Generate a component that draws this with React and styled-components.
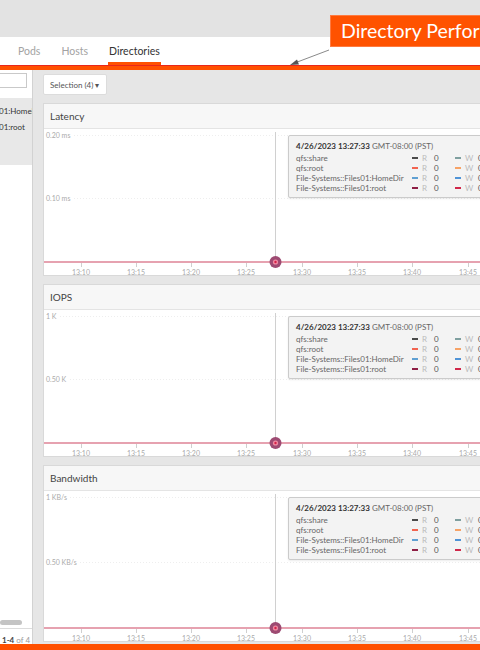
import React from 'react';
import styled, { createGlobalStyle } from 'styled-components';

const Global = createGlobalStyle`
  html, body { margin: 0; padding: 0; width: 480px; height: 650px; overflow: hidden; background: #e3e3e3; }
  body { font-family: Lato, "Open Sans", sans-serif; }
  * { box-sizing: border-box; }
`;

const Page = styled.div`
  position: relative;
  width: 480px;
  height: 650px;
  display: flex;
  flex-direction: column;
  overflow: hidden;
`;

const TopBand = styled.div`
  height: 37px;
  flex-shrink: 0;
  background: #e3e3e3;
`;

const TabBar = styled.nav`
  height: 28px;
  flex-shrink: 0;
  background: #fff;
  display: flex;
  align-items: stretch;
  gap: 19px;
  padding-left: 17px;
`;

const Tab = styled.div`
  display: flex;
  align-items: center;
  padding: 3px 1px 0;
  font-size: 10.5px;
  color: ${p => (p.$active ? '#333' : '#a3a3a3')};
  border-bottom: 3px solid ${p => (p.$active ? '#ff5000' : 'transparent')};
`;

const OrangeRule = styled.div`
  height: 5px;
  flex-shrink: 0;
  background: #ff5000;
  border-top: 1px solid #e8261c;
`;

const Body = styled.div`
  flex: 1;
  display: flex;
  min-height: 0;
`;

const Sidebar = styled.aside`
  width: 33px;
  flex-shrink: 0;
  background: #fff;
  border-right: 1px solid #d2d2d2;
  display: flex;
  flex-direction: column;
  overflow: hidden;
`;

const Search = styled.div`
  margin: 3px 0 0 -12px;
  width: 39px;
  height: 15px;
  border: 1px solid #c9c9c9;
  background: #fff;
`;

const List = styled.div`
  margin-top: 10px;
  height: 67px;
  background: #e8e8e8;
  padding-top: 5px;
`;

const ListItem = styled.div`
  font-size: 8px;
  line-height: 16px;
  color: #333;
  white-space: nowrap;
  margin-left: -1px;
`;

const Spacer = styled.div`
  flex: 1;
`;

const Scrollbar = styled.div`
  width: 22px;
  height: 5px;
  border-radius: 3px;
  background: #c4c4c4;
  margin-bottom: 3px;
`;

const Footer = styled.div`
  height: 16px;
  border-top: 1px solid #dcdcdc;
  padding: 6px 0 0 2px;
  font-size: 8px;
  line-height: 10px;
  color: #999;
  white-space: nowrap;
  b { color: #444; font-weight: 700; }
`;

const Main = styled.main`
  flex: 1;
  background: #e6e6e6;
  padding: 4px 0 0 10px;
  display: flex;
  flex-direction: column;
  align-items: flex-start;
  overflow: hidden;
`;

const SelectButton = styled.button`
  height: 21px;
  width: 64px;
  padding: 0 0 0 6px;
  border: 1px solid #dcdcdc;
  border-radius: 2px;
  background: #fff;
  font-family: inherit;
  font-size: 8px;
  color: #555;
  text-align: left;
  white-space: nowrap;
`;

const Panel = styled.section`
  flex-shrink: 0;
  margin-top: 8px;
  width: 470px;
  height: ${p => p.$h}px;
  background: #fff;
  border: 1px solid #d9d9d9;
  display: flex;
  flex-direction: column;
`;

const PanelHeader = styled.header`
  height: 25px;
  flex-shrink: 0;
  background: #f7f7f7;
  border-bottom: 1px solid #e4e4e4;
  display: flex;
  align-items: center;
  padding-left: 6px;
  font-size: 10px;
  color: #444;
`;

const ChartArea = styled.div`
  position: relative;
  flex: 1;
`;

const Tooltip = styled.div`
  position: absolute;
  left: 244px;
  top: 6px;
  width: 240px;
  height: 63px;
  background: #f3f3f3;
  border: 1px solid #cbcbcb;
  border-radius: 2px;
  box-shadow: 0 1px 2px rgba(0, 0, 0, 0.08);
  padding: 5px 0 0 7px;
  font-size: 8px;
  color: #666;
`;

const TipDate = styled.div`
  line-height: 11px;
  color: #666;
  margin-bottom: 1px;
  white-space: nowrap;
  b { color: #333; font-weight: 700; }
`;

const TipRow = styled.div`
  display: grid;
  grid-template-columns: 116px 10px 12px 21px 10px 13px 20px;
  align-items: center;
  line-height: 10px;
  white-space: nowrap;
`;

const Dash = styled.span`
  display: block;
  width: 6px;
  height: 2px;
  background: ${p => p.$c};
`;

const Letter = styled.span`
  color: #bbb;
`;

const Val = styled.span`
  color: #555;
`;

const Callout = styled.div`
  position: absolute;
  left: 330px;
  top: 15px;
  width: 170px;
  height: 32px;
  background: #ff5200;
  border: 1px solid #ff7a40;
  color: #fff;
  font-family: Lato, "Open Sans", sans-serif;
  font-size: 19.5px;
  line-height: 30px;
  padding-left: 10px;
  white-space: nowrap;
  overflow: hidden;
`;

const ArrowLayer = styled.svg`
  position: absolute;
  left: 0;
  top: 0;
  pointer-events: none;
`;

const BottomBand = styled.div`
  height: 6px;
  flex-shrink: 0;
  background: #ff5000;
`;

const TICKS = [
  [37, '13:10'], [92, '13:15'], [147, '13:20'], [202, '13:25'],
  [258, '13:30'], [313, '13:35'], [368, '13:40'], [424, '13:45'], [479, '13:50'],
];

const SERIES = [
  { name: 'qfs:share', r: '#4a4a4a', w: '#7f9f9f' },
  { name: 'qfs:root', r: '#f26450', w: '#f6a266' },
  { name: 'File-Systems::Files01:HomeDir', r: '#5fa0d2', w: '#4f93d6' },
  { name: 'File-Systems::Files01:root', r: '#8e1f45', w: '#d0284a' },
];

function Chart({ height, top, mid, topW, midW }) {
  const base = height - 13;
  const midY = (6 + base) / 2;
  return (
    <svg width="470" height={height} style={{ display: 'block' }}>
      <line x1={topW} y1="6.5" x2="470" y2="6.5" stroke="#eeeeee" strokeDasharray="1 2" />
      <line x1={midW} y1={midY} x2="470" y2={midY} stroke="#eeeeee" strokeDasharray="1 2" />
      <text x="2" y="8.5" fontSize="7" fill="#aaa" fontFamily="Lato, sans-serif">{top}</text>
      <text x="2" y={midY + 2.5} fontSize="7" fill="#aaa" fontFamily="Lato, sans-serif">{mid}</text>
      <line x1="231.5" y1="3" x2="231.5" y2={base} stroke="#d0d0d0" />
      <line x1="0" y1={base} x2="470" y2={base} stroke="#e6a2b0" strokeWidth="2" />
      {TICKS.map(([x, l]) => (
        <g key={l}>
          <line x1={x + 0.5} y1={base + 1} x2={x + 0.5} y2={base + 5} stroke="#cfcfcf" />
          <text x={x} y={base + 12.5} fontSize="7" fill="#aaa" textAnchor="middle" fontFamily="Lato, sans-serif">{l}</text>
        </g>
      ))}
      <circle cx="231.5" cy={base} r="6" fill="#9d4a72" />
      <circle cx="231.5" cy={base} r="2.6" fill="#f08aa2" />
      <circle cx="231.5" cy={base} r="1.2" fill="#d42048" />
    </svg>
  );
}

function TipBox() {
  return (
    <Tooltip>
      <TipDate><b>4/26/2023 13:27:33</b> GMT-08:00 (PST)</TipDate>
      {SERIES.map(s => (
        <TipRow key={s.name}>
          <span>{s.name}</span>
          <Dash $c={s.r} />
          <Letter>R</Letter>
          <Val>0</Val>
          <Dash $c={s.w} />
          <Letter>W</Letter>
          <Val>0</Val>
        </TipRow>
      ))}
    </Tooltip>
  );
}

function ChartPanel({ title, h, top, mid, topW, midW }) {
  const chartH = h - 2 - 25;
  return (
    <Panel $h={h}>
      <PanelHeader>{title}</PanelHeader>
      <ChartArea>
        <Chart height={chartH} top={top} mid={mid} topW={topW} midW={midW} />
        <TipBox />
      </ChartArea>
    </Panel>
  );
}

export default function App() {
  return (
    <Page>
      <Global />
      <TopBand />
      <TabBar>
        <Tab>Pods</Tab>
        <Tab>Hosts</Tab>
        <Tab $active>Directories</Tab>
      </TabBar>
      <OrangeRule />
      <Body>
        <Sidebar>
          <Search />
          <List>
            <ListItem>01:HomeDir</ListItem>
            <ListItem>01:root</ListItem>
          </List>
          <Spacer />
          <Scrollbar />
          <Footer><b>1-4</b> of 4</Footer>
        </Sidebar>
        <Main>
          <SelectButton>Selection (4) ▾</SelectButton>
          <ChartPanel title="Latency" h={173} top="0.20 ms" mid="0.10 ms" topW={30} midW={30} />
          <ChartPanel title="IOPS" h={173} top="1 K" mid="0.50 K" topW={16} midW={26} />
          <ChartPanel title="Bandwidth" h={177} top="1 KB/s" mid="0.50 KB/s" topW={26} midW={36} />
        </Main>
      </Body>
      <BottomBand />
      <Callout>Directory Performance</Callout>
      <ArrowLayer width="480" height="80">
        <line x1="329" y1="50" x2="296" y2="62.5" stroke="#8a8a8a" strokeWidth="1" />
        <polygon points="290,65 297,59.5 299,64.5" fill="#555" />
      </ArrowLayer>
    </Page>
  );
}
